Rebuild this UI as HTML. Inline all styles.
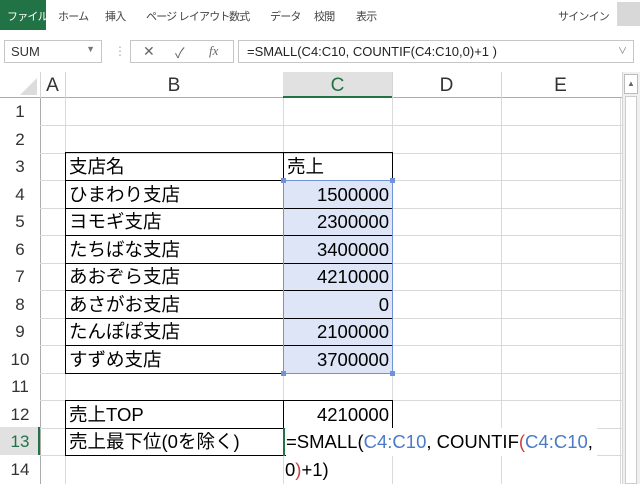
<!DOCTYPE html><html><head><meta charset="utf-8"><style>
body{margin:0;width:640px;height:484px;overflow:hidden;background:#fff;font-family:"Liberation Sans","Noto Sans CJK JP",sans-serif;position:relative}
.a{position:absolute;box-sizing:border-box}
.t{font-size:11px;color:#444;top:8px;letter-spacing:-0.8px;white-space:nowrap}
.cell{font-size:18.5px;color:#000;line-height:28px;white-space:nowrap}
.rh{left:0;width:40px;text-align:center;font-size:17px;color:#333;line-height:27px}
.hl{height:1px;background:#d9d9d9;left:40px;width:582px}
.vl{width:1px;background:#d9d9d9;top:98px;height:386px}
</style></head><body>
<div class="a" style="left:0;top:0;width:46px;height:30px;background:#217346"></div>
<div class="a t" style="left:7px;color:#fff">ファイル</div>
<div class="a t" style="left:58px">ホーム</div>
<div class="a t" style="left:105px">挿入</div>
<div class="a t" style="left:146px">ページ レイアウト</div>
<div class="a t" style="left:229px">数式</div>
<div class="a t" style="left:270px">データ</div>
<div class="a t" style="left:314px">校閲</div>
<div class="a t" style="left:356px">表示</div>
<div class="a t" style="left:558px">サインイン</div>
<div class="a" style="left:617px;top:2px;width:23px;height:24px;background:#d8d8d8"></div>
<div class="a" style="left:4px;top:40px;width:98px;height:23px;border:1px solid #c6c6c6;font-size:13px;color:#333;padding:3px 6px">SUM<span style="position:absolute;right:6px;top:3px;font-size:9px;color:#777">▼</span></div>
<div class="a" style="left:114px;top:44px;color:#aaa;font-size:12px">⋮</div>
<div class="a" style="left:130px;top:40px;width:104px;height:23px;border:1px solid #c6c6c6;color:#666;font-size:14px"><span style="position:absolute;left:12px;top:2px">✕</span><span style="position:absolute;left:44px;top:2px">✓</span><span style="position:absolute;left:78px;top:2px;font-family:'Liberation Serif';font-style:italic;font-size:13px">fx</span></div>
<div class="a" style="left:238px;top:40px;width:396px;height:23px;border:1px solid #c6c6c6;font-size:13px;color:#222;padding:3px 8px">=SMALL(C4:C10, COUNTIF(C4:C10,0)+1 )<span style="position:absolute;right:6px;top:3px;font-size:9px;color:#777">∨</span></div>
<div class="a" style="left:0;top:72px;width:622px;height:26px;background:#fff;border-bottom:1px solid #ababab"></div>
<div class="a" style="left:283px;top:72px;width:109px;height:26px;background:#e1e1e1;border-bottom:2px solid #217346"></div>
<svg class="a" style="left:18px;top:78px" width="20" height="18"><polygon points="19,0 19,17 2,17" fill="#dcdcdc"/></svg>
<div class="a" style="left:40px;top:72px;width:1px;height:26px;background:#d4d4d4"></div>
<div class="a" style="left:65px;top:72px;width:1px;height:26px;background:#d4d4d4"></div>
<div class="a" style="left:392px;top:72px;width:1px;height:26px;background:#d4d4d4"></div>
<div class="a" style="left:501px;top:72px;width:1px;height:26px;background:#d4d4d4"></div>
<div class="a cell" style="left:40px;width:25px;top:72px;text-align:center;font-size:19px;color:#333">A</div>
<div class="a cell" style="left:65px;width:218px;top:72px;text-align:center;font-size:19px;color:#333">B</div>
<div class="a cell" style="left:283px;width:109px;top:72px;text-align:center;font-size:19px;color:#217346">C</div>
<div class="a cell" style="left:392px;width:109px;top:72px;text-align:center;font-size:19px;color:#333">D</div>
<div class="a cell" style="left:501px;width:119px;top:72px;text-align:center;font-size:19px;color:#333">E</div>
<div class="a" style="left:622px;top:72px;width:18px;height:412px;background:#f0f0f0;border-left:1px solid #d4d4d4"></div>
<div class="a" style="left:624px;top:74px;width:14px;height:20px;border:1px solid #bbb;background:#fff;font-size:8px;color:#666;text-align:center;line-height:18px">▲</div>
<div class="a" style="left:625px;top:96px;width:12px;height:388px;border:1px solid #ccc;background:#fff"></div>
<div class="a" style="left:40px;top:98px;width:1px;height:386px;background:#ababab"></div>
<div class="a" style="left:0;top:427px;width:40px;height:28px;background:#e1e1e1;border-right:2px solid #217346"></div>
<div class="a vl" style="left:65px"></div><div class="a vl" style="left:283px"></div><div class="a vl" style="left:392px"></div><div class="a vl" style="left:501px"></div><div class="a vl" style="left:620px"></div>
<div class="a hl" style="top:125px"></div><div class="a hl" style="top:153px"></div><div class="a hl" style="top:180px"></div><div class="a hl" style="top:208px"></div><div class="a hl" style="top:235px"></div><div class="a hl" style="top:263px"></div><div class="a hl" style="top:290px"></div><div class="a hl" style="top:318px"></div><div class="a hl" style="top:345px"></div><div class="a hl" style="top:373px"></div><div class="a hl" style="top:400px"></div><div class="a hl" style="top:428px"></div><div class="a hl" style="top:455px"></div>
<div class="a rh" style="top:98px">1</div><div class="a rh" style="top:126px">2</div><div class="a rh" style="top:153px">3</div><div class="a rh" style="top:181px">4</div><div class="a rh" style="top:208px">5</div><div class="a rh" style="top:236px">6</div><div class="a rh" style="top:263px">7</div><div class="a rh" style="top:291px">8</div><div class="a rh" style="top:318px">9</div><div class="a rh" style="top:346px">10</div><div class="a rh" style="top:373px">11</div><div class="a rh" style="top:401px">12</div><div class="a rh" style="top:428px;color:#217346">13</div><div class="a rh" style="top:456px">14</div>
<div class="a" style="left:283px;top:180px;width:110px;height:194px;background:#dde5f6"></div>
<div class="a" style="left:65px;top:152px;width:328px;height:222px;border:1px solid #000"></div>
<div class="a" style="left:283px;top:152px;width:1px;height:222px;background:#000"></div>
<div class="a" style="left:65px;top:180px;width:328px;height:1px;background:#000"></div>
<div class="a" style="left:65px;top:208px;width:328px;height:1px;background:#000"></div>
<div class="a" style="left:65px;top:235px;width:328px;height:1px;background:#000"></div>
<div class="a" style="left:65px;top:263px;width:328px;height:1px;background:#000"></div>
<div class="a" style="left:65px;top:290px;width:328px;height:1px;background:#000"></div>
<div class="a" style="left:65px;top:318px;width:328px;height:1px;background:#000"></div>
<div class="a" style="left:65px;top:345px;width:328px;height:1px;background:#000"></div>
<div class="a" style="left:65px;top:400px;width:328px;height:56px;border:1px solid #000;border-right:none"></div>
<div class="a" style="left:392px;top:400px;width:1px;height:28px;background:#000"></div>
<div class="a" style="left:65px;top:428px;width:218px;height:1px;background:#000"></div>
<div class="a" style="left:283px;top:400px;width:1px;height:56px;background:#000"></div>
<div class="a" style="left:283px;top:428px;width:2px;height:28px;background:#217346"></div>
<div class="a" style="left:283px;top:180px;width:110px;height:194px;border:1px solid #7093d8"></div>
<div class="a" style="left:281px;top:178px;width:5px;height:5px;background:#7093d8"></div>
<div class="a" style="left:390px;top:178px;width:5px;height:5px;background:#7093d8"></div>
<div class="a" style="left:281px;top:371px;width:5px;height:5px;background:#7093d8"></div>
<div class="a" style="left:390px;top:371px;width:5px;height:5px;background:#7093d8"></div>
<div class="a cell" style="left:69px;top:153px">支店名</div><div class="a cell" style="left:287px;top:153px">売上</div>
<div class="a cell" style="left:69px;top:181px">ひまわり支店</div>
<div class="a cell" style="left:69px;top:208px">ヨモギ支店</div>
<div class="a cell" style="left:69px;top:236px">たちばな支店</div>
<div class="a cell" style="left:69px;top:263px">あおぞら支店</div>
<div class="a cell" style="left:69px;top:291px">あさがお支店</div>
<div class="a cell" style="left:69px;top:318px">たんぽぽ支店</div>
<div class="a cell" style="left:69px;top:346px">すずめ支店</div>
<div class="a cell" style="left:283px;width:106px;text-align:right;top:181px">1500000</div>
<div class="a cell" style="left:283px;width:106px;text-align:right;top:208px">2300000</div>
<div class="a cell" style="left:283px;width:106px;text-align:right;top:236px">3400000</div>
<div class="a cell" style="left:283px;width:106px;text-align:right;top:263px">4210000</div>
<div class="a cell" style="left:283px;width:106px;text-align:right;top:291px">0</div>
<div class="a cell" style="left:283px;width:106px;text-align:right;top:318px">2100000</div>
<div class="a cell" style="left:283px;width:106px;text-align:right;top:346px">3700000</div>
<div class="a cell" style="left:69px;top:401px">売上TOP</div>
<div class="a cell" style="left:283px;width:106px;text-align:right;top:401px">4210000</div>
<div class="a cell" style="left:69px;top:428px">売上最下位(0を除く)</div>
<div class="a cell" style="left:286px;top:428px;background:#fff;padding-right:4px">=SMALL(<span style="color:#4a7ac9">C4:C10</span>, COUNTIF<span style="color:#d04040">(</span><span style="color:#4a7ac9">C4:C10</span>,</div>
<div class="a cell" style="left:285px;top:456px">0<span style="color:#d04040">)</span>+1)</div>
</body></html>
